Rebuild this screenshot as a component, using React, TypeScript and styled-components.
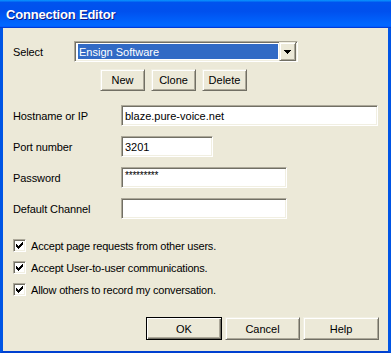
import React from "react";
import styled, { createGlobalStyle, css } from "styled-components";

const Global = createGlobalStyle`
  html, body { margin: 0; padding: 0; }
  body {
    width: 391px; height: 353px; overflow: hidden;
    font-family: "Liberation Sans", Arial, sans-serif;
    font-size: 11px; color: #000;
  }
`;

const Window = styled.div`
  width: 391px; height: 353px;
  display: flex; flex-direction: column;
  box-sizing: border-box;
`;

const TitleBar = styled.div`
  height: 28px; flex: none;
  display: flex; align-items: center;
  padding-left: 6px;
  background: linear-gradient(180deg, #0997ff 0%, #0053ee 9%, #0050ee 40%, #0066ff 86%, #0066ff 92%, #005bff 95%, #003dd7 97%, #003dd7 100%);
`;

const Title = styled.span`
  font-family: "Liberation Sans", Arial, sans-serif;
  font-weight: bold; font-size: 13px;
  color: #fff; letter-spacing: -0.2px;
  text-shadow: 1px 1px #0a1883;
  margin-top: 1px;
`;

const Frame = styled.div`
  flex: 1;
  display: flex;
  border-left: 3px solid #0055e5;
  border-right: 3px solid #0055e5;
  border-bottom: 2px solid #0040d0;
`;

const Body = styled.div`
  flex: 1;
  background: #ece9d8;
  padding: 13px 9px 0 10px;
  display: flex; flex-direction: column;
`;

const Row = styled.div<{ $h?: number; $mt?: number }>`
  display: flex; align-items: center;
  height: ${(p) => p.$h ?? 21}px;
  margin-top: ${(p) => p.$mt ?? 0}px;
`;

const Label = styled.div<{ $w: number }>`
  width: ${(p) => p.$w}px; flex: none;
  white-space: nowrap;
  letter-spacing: -0.1px;
`;

const sunken = css`
  box-sizing: border-box;
  border: 1px solid;
  border-color: #aca899 #ffffff #ffffff #aca899;
  box-shadow: inset 1px 1px #716f64, inset -1px -1px #f1efe2;
`;

const raised = css`
  box-sizing: border-box;
  background: #ece9d8;
  border: 1px solid;
  border-color: #f1efe2 #716f64 #716f64 #f1efe2;
  box-shadow: inset 1px 1px #ffffff, inset -1px -1px #aca899;
`;

const Combo = styled.div`
  ${sunken};
  width: 224px; height: 21px;
  background: #fff;
  display: flex; align-items: stretch;
  padding: 1px 1px 1px 2px;
`;

const Selected = styled.div`
  flex: 1;
  margin: 1px;
  background: #316ac5;
  color: #fff;
  display: flex; align-items: center;
  padding-left: 1px;
`;

const DropButton = styled.div`
  ${raised};
  width: 17px; margin: -1px 0;
  display: flex; align-items: center; justify-content: center;
`;

const ActionRow = styled.div`
  display: flex; gap: 6px;
  margin-top: 7px;
  padding-left: 87px;
`;

const Button = styled.div<{ $w: number; $h: number; $default?: boolean }>`
  ${raised};
  width: ${(p) => p.$w}px; height: ${(p) => p.$h}px;
  display: flex; align-items: center; justify-content: center;
  ${(p) =>
    p.$default &&
    css`
      border-color: #000;
      box-shadow: inset 1px 1px #ffffff, inset -1px -1px #716f64, inset -2px -2px #aca899;
    `}
`;

const Fields = styled.div`
  display: flex; flex-direction: column; gap: 10px;
  margin-top: 14px;
`;

const Field = styled.div<{ $w: number; $tiny?: boolean }>`
  ${sunken};
  width: ${(p) => p.$w}px; height: 21px;
  background: #fff;
  padding: 0 3px;
  display: flex; align-items: center;
  font-size: 11px;
  ${(p) =>
    p.$tiny &&
    css`
      align-items: flex-start;
      font-size: 10px;
      line-height: 10px;
      padding-top: 3px;
      letter-spacing: -0.2px;
    `}
`;

const Checks = styled.div`
  display: flex; flex-direction: column; gap: 9px;
  margin-top: 20px;
`;

const CheckRow = styled.div`
  display: flex; align-items: center; gap: 5px;
  height: 13px;
  font-size: 11px;
  letter-spacing: -0.2px;
`;

const Box = styled.div`
  ${sunken};
  width: 13px; height: 13px; flex: none;
  background: #fff;
  display: flex; align-items: center; justify-content: center;
`;

const Footer = styled.div`
  display: flex; justify-content: flex-end; gap: 3px;
  margin-top: 21px;
`;

const CheckMark = () => (
  <svg width="7" height="7" viewBox="0 0 7 7" shapeRendering="crispEdges">
    <rect x="6" y="0" width="1" height="1" fill="#000" />
    <rect x="5" y="1" width="2" height="1" fill="#000" />
    <rect x="0" y="2" width="1" height="1" fill="#000" />
    <rect x="4" y="2" width="3" height="1" fill="#000" />
    <rect x="0" y="3" width="2" height="1" fill="#000" />
    <rect x="3" y="3" width="3" height="1" fill="#000" />
    <rect x="0" y="4" width="5" height="1" fill="#000" />
    <rect x="1" y="5" width="3" height="1" fill="#000" />
    <rect x="2" y="6" width="1" height="1" fill="#000" />
  </svg>
);

const Arrow = () => (
  <svg width="7" height="4" viewBox="0 0 7 4" shapeRendering="crispEdges">
    <path d="M0 0H7V1H6V2H5V3H4V4H3V3H2V2H1V1H0Z" fill="#000" />
  </svg>
);

const fields = [
  { label: "Hostname or IP", value: "blaze.pure-voice.net", w: 257 },
  { label: "Port number", value: "3201", w: 92 },
  { label: "Password", value: "*********", w: 166, tiny: true },
  { label: "Default Channel", value: "", w: 166 },
];

const checks = [
  "Accept page requests from other users.",
  "Accept User-to-user communications.",
  "Allow others to record my conversation.",
];

export default function App() {
  return (
    <>
      <Global />
      <Window>
        <TitleBar>
          <Title>Connection Editor</Title>
        </TitleBar>
        <Frame>
          <Body>
            <Row>
              <Label $w={61}>Select</Label>
              <Combo>
                <Selected>Ensign Software</Selected>
                <DropButton>
                  <Arrow />
                </DropButton>
              </Combo>
            </Row>
            <ActionRow>
              <Button $w={45} $h={22}>New</Button>
              <Button $w={45} $h={22}>Clone</Button>
              <Button $w={45} $h={22}>Delete</Button>
            </ActionRow>
            <Fields>
              {fields.map((f) => (
                <Row key={f.label}>
                  <Label $w={108}>{f.label}</Label>
                  <Field $w={f.w} $tiny={f.tiny}>{f.value}</Field>
                </Row>
              ))}
            </Fields>
            <Checks>
              {checks.map((c) => (
                <CheckRow key={c}>
                  <Box>
                    <CheckMark />
                  </Box>
                  {c}
                </CheckRow>
              ))}
            </Checks>
            <Footer>
              <Button $w={76} $h={23} $default>OK</Button>
              <Button $w={75} $h={23}>Cancel</Button>
              <Button $w={76} $h={23}>Help</Button>
            </Footer>
          </Body>
        </Frame>
      </Window>
    </>
  );
}
